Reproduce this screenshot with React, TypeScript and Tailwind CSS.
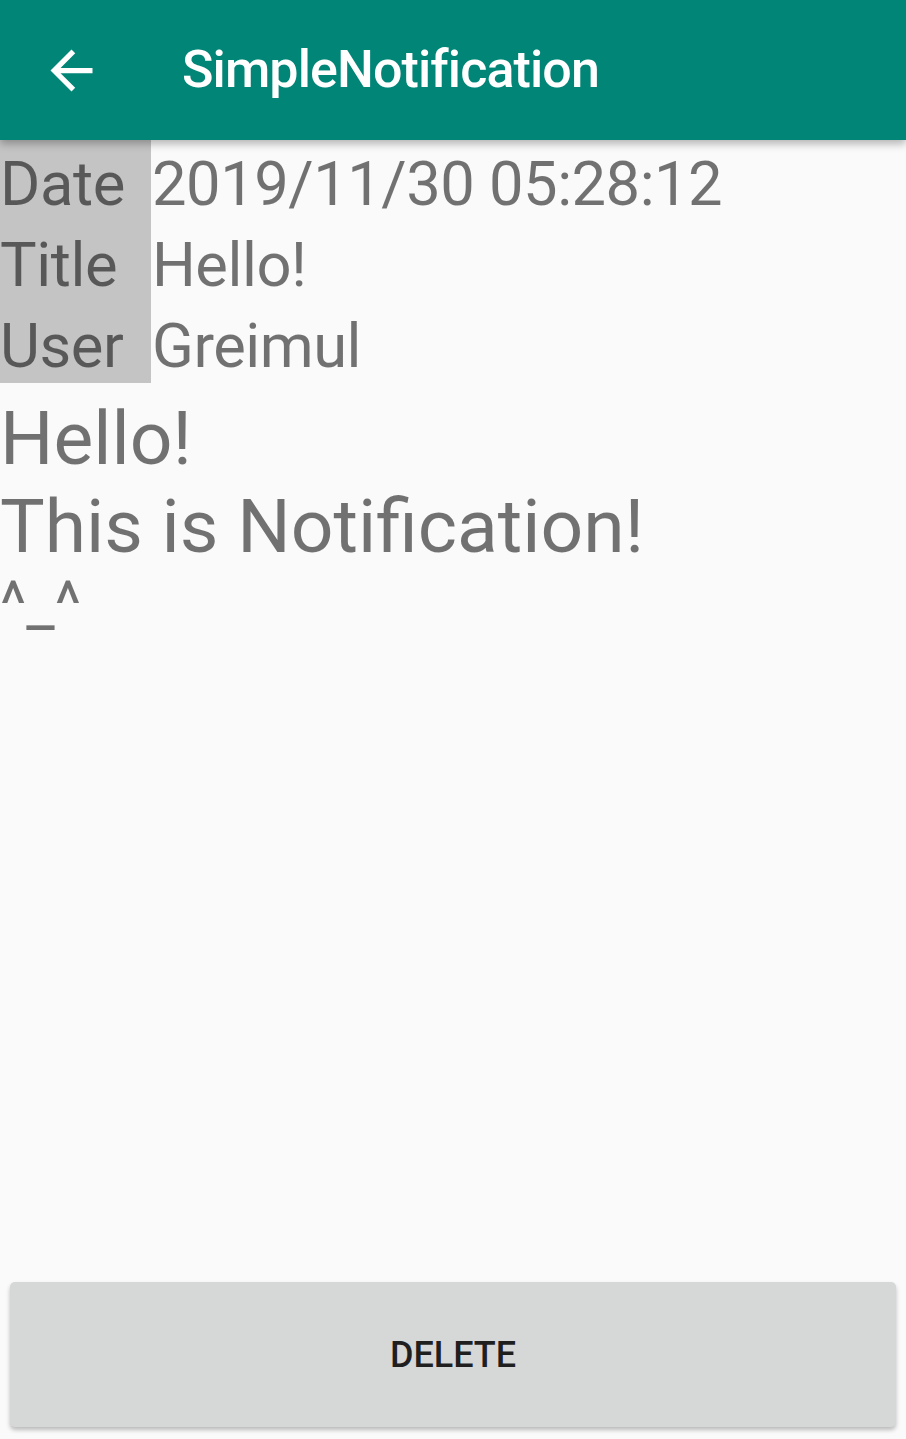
const rows = [
  { label: 'Date', value: '2019/11/30 05:28:12' },
  { label: 'Title', value: 'Hello!' },
  { label: 'User', value: 'Greimul' },
];

const App = () => {
  return (
    <div className="flex flex-col h-[1439px] bg-[#fafafa] font-['Roboto',sans-serif] overflow-hidden">
      <header className="relative z-10 flex items-center h-[140px] bg-[#008577] shadow-[0_4px_8px_rgba(0,0,0,0.28)]">
        <div className="ml-[40px] w-[63px] h-[63px]">
          <svg viewBox="0 0 24 24" width="63" height="63" fill="#ffffff">
            <path d="M20 11H7.83l5.59-5.59L12 4l-8 8 8 8 1.41-1.41L7.83 13H20v-2z" />
          </svg>
        </div>
        <h1 className="ml-[79px] text-[52px] font-medium tracking-[-0.9px] text-white">SimpleNotification</h1>
      </header>

      <div className="flex">
        <div className="w-[151px] bg-[#c4c4c4]">
          {rows.map((row) => (
            <div key={row.label} className="h-[81px] pt-[7px] text-[61.5px] leading-[74px] tracking-[-0.4px] text-black/55">
              {row.label}
            </div>
          ))}
        </div>
        <div className="pl-[1px]">
          {rows.map((row) => (
            <div key={row.label} className="h-[81px] pt-[7px] text-[61.5px] leading-[74px] tracking-[-0.5px] text-black/55 whitespace-nowrap">
              {row.value}
            </div>
          ))}
        </div>
      </div>

      <div className="pt-[11px] text-[75px] leading-[88px] text-black/55">
        <div>Hello!</div>
        <div>This is Notification!</div>
      </div>
      <div className="pt-[12px] text-[63px] leading-[43px] text-black/55">^_^</div>

      <div className="flex-1" />

      <div className="px-[10px] pb-[12px]">
        <button className="w-full h-[145px] rounded-[5px] bg-[#d6d7d7] shadow-[0_3px_4px_rgba(0,0,0,0.25)] text-[36px] font-medium text-[#1f1f1f]">
          DELETE
        </button>
      </div>
    </div>
  );
};

export default App;
